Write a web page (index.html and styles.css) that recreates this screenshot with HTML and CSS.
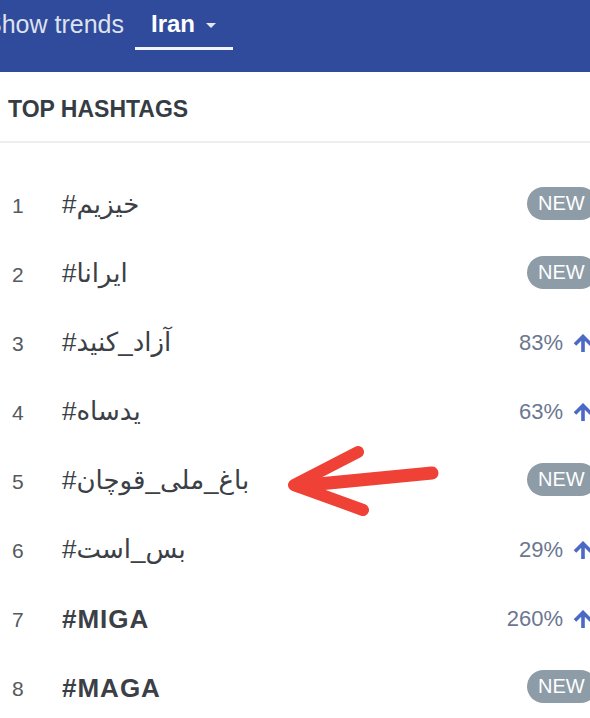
FILE: index.html
```html
<!DOCTYPE html>
<html lang="en">
<head>
    <meta charset="UTF-8">
    <meta name="viewport" content="width=device-width, initial-scale=1.0">
    <title>Top Hashtags</title>
    <link rel="stylesheet" href="styles.css">
</head>
<body>
    <header class="topbar">
        <span class="tab">Show trends</span>
        <span class="tab tab-active">Iran <span class="caret"></span></span>
    </header>

    <section class="trends">
        <h2 class="trends-title">TOP HASHTAGS</h2>
        <ol class="trend-list">
            <li class="trend-row">
                <span class="rank">1</span>
                <span class="tag">#خیزیم</span>
                <span class="badge">NEW</span>
            </li>
            <li class="trend-row">
                <span class="rank">2</span>
                <span class="tag">#ایرانا</span>
                <span class="badge">NEW</span>
            </li>
            <li class="trend-row">
                <span class="rank">3</span>
                <span class="tag">#آزاد_کنید</span>
                <span class="change">83% <svg class="up" viewBox="0 0 20 18"><path d="M10 18V2.5M2 10.5L10 2.5l8 8"/></svg></span>
            </li>
            <li class="trend-row">
                <span class="rank">4</span>
                <span class="tag">#یدساه</span>
                <span class="change">63% <svg class="up" viewBox="0 0 20 18"><path d="M10 18V2.5M2 10.5L10 2.5l8 8"/></svg></span>
            </li>
            <li class="trend-row">
                <span class="rank">5</span>
                <span class="tag">#باغ_ملی_قوچان</span>
                <span class="badge">NEW</span>
            </li>
            <li class="trend-row">
                <span class="rank">6</span>
                <span class="tag">#بس_است</span>
                <span class="change">29% <svg class="up" viewBox="0 0 20 18"><path d="M10 18V2.5M2 10.5L10 2.5l8 8"/></svg></span>
            </li>
            <li class="trend-row">
                <span class="rank">7</span>
                <span class="tag tag-latin">#MIGA</span>
                <span class="change">260% <svg class="up" viewBox="0 0 20 18"><path d="M10 18V2.5M2 10.5L10 2.5l8 8"/></svg></span>
            </li>
            <li class="trend-row">
                <span class="rank">8</span>
                <span class="tag tag-latin">#MAGA</span>
                <span class="badge">NEW</span>
            </li>
        </ol>
    </section>

    <!-- red marker drawn over the screenshot -->
    <svg class="markup" width="590" height="718" viewBox="0 0 590 718">
        <path class="markup-shaft" d="M298 486L432 473"/>
        <path class="markup-head" d="M358 452L294 485L363 510"/>
    </svg>
</body>
</html>
```

FILE: styles.css
```css
html, body {
    overflow: hidden;
}

body {
    margin: 0;
    position: relative;
    font-family: 'Liberation Sans', 'DejaVu Sans', sans-serif;
    background-color: #fff;
    color: #3b4046;
}

.topbar {
    display: flex;
    align-items: flex-start;
    gap: 11px;
    height: 72px;
    background-color: #304a9c;
}

.tab {
    display: inline-flex;
    align-items: center;
    padding-top: 10px;
    line-height: 28px;
    font-size: 25px;
    color: #dde2ef;
}

.tab:first-child {
    margin-left: -15px;
}

.tab-active {
    padding: 10px 17px 9px 16px;
    font-size: 24px;
    font-weight: bold;
    color: #fff;
    border-bottom: 3px solid #f2f4fa;
}

.caret {
    width: 0;
    height: 0;
    margin-left: 11px;
    margin-top: 2px;
    border-left: 5px solid transparent;
    border-right: 5px solid transparent;
    border-top: 5px solid #e4e8f3;
}

.trends-title {
    margin: 0;
    padding: 23px 8px 18px;
    font-size: 23px;
    line-height: 28px;
    font-weight: bold;
    color: #353c43;
    border-bottom: 2px solid #eeeeee;
}

.trend-list {
    list-style: none;
    margin: 0;
    width: 585px;
    padding: 27px 0 0 12px;
}

.trend-row {
    display: flex;
    align-items: center;
    height: 69px;
}

.rank {
    width: 50px;
    margin-top: 3px;
    font-size: 21px;
    color: #555a60;
}

.tag {
    flex: 1;
    font-size: 26px;
    color: #3b4046;
}

.tag-latin {
    font-size: 26px;
    font-weight: bold;
    letter-spacing: 1px;
    margin-top: 2px;
}

.badge {
    display: flex;
    align-items: center;
    box-sizing: border-box;
    width: 70px;
    height: 33px;
    margin-top: -3px;
    padding-left: 11px;
    border-radius: 17px;
    background-color: #8d9ca7;
    color: #fff;
    font-size: 20px;
}

.change {
    display: flex;
    align-items: center;
    font-size: 22px;
    color: #6b7790;
    margin-right: 4px;
}

.up {
    width: 20px;
    height: 18px;
    margin-left: 10px;
    fill: none;
    stroke: #4a6ac4;
    stroke-width: 3.6;
}

.markup {
    position: absolute;
    top: 0;
    left: 0;
    pointer-events: none;
}

.markup path {
    fill: none;
    stroke: #ef4136;
    stroke-linecap: round;
    stroke-linejoin: round;
}

.markup-shaft {
    stroke-width: 13;
}

.markup-head {
    stroke-width: 12;
}
```
